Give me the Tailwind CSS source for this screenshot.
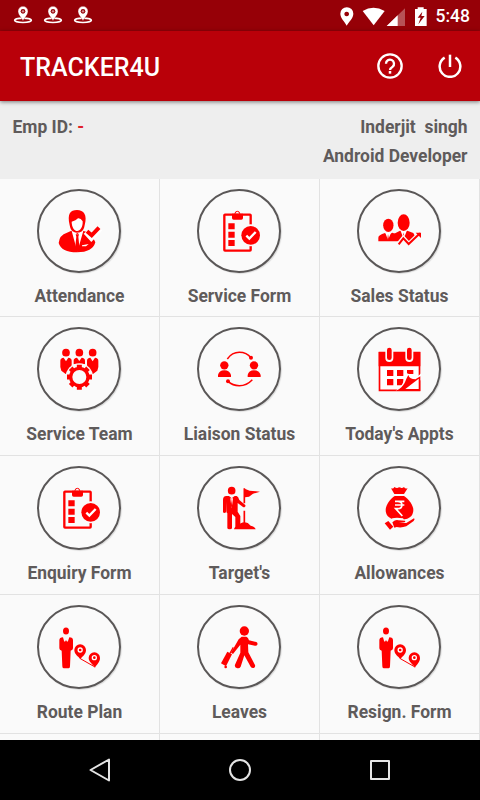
<!DOCTYPE html>
<html lang="en">
<head>
    <meta charset="UTF-8">
    <meta name="viewport" content="width=device-width, initial-scale=1.0">
    <title>TRACKER4U</title>
    <script src="https://cdn.jsdelivr.net/npm/@tailwindcss/browser@4"></script>
</head>
<body class="w-[480px] h-[800px] overflow-hidden flex flex-col bg-[#eeeeee] font-[Roboto,sans-serif] text-[#5f5b5b]">
    <!-- Shared icons -->
    <svg class="hidden">
        <symbol id="tracker" viewBox="0 0 60 54">
            <ellipse cx="30" cy="43" rx="25" ry="6.500" fill="none" stroke="#fff" stroke-width="5"/>
            <path d="M30 45C25 34 15 27 15 16a15 15 0 0 1 30 0C45 27 35 34 30 45Z" fill="#fff" stroke="#960007" stroke-width="1"/>
            <circle cx="30" cy="16" r="7" fill="#960007"/>
            <circle cx="30" cy="16" r="3.500" fill="#d48a90"/>
        </symbol>
        <symbol id="form" viewBox="0 0 144 144">
            <rect x="28" y="23" width="79" height="108" rx="2" fill="none" stroke="red" stroke-width="7"/>
            <circle cx="67" cy="20" r="7" fill="none" stroke="red" stroke-width="3"/>
            <path d="M51 20h33v13q0 5-5 5H56q-5 0-5-5Z"/>
            <path d="M40 49h19v18H40ZM40 74h19v18H40ZM40 99h19v18H40Z"/>
            <circle cx="107" cy="85" r="33" fill="#fafafa"/>
            <circle cx="107" cy="85" r="28"/>
            <path d="m94 86 9 9 19-20" fill="none" stroke="#fff" stroke-width="7"/>
        </symbol>
        <symbol id="route" viewBox="0 0 144 144">
            <ellipse cx="33" cy="24" rx="9" ry="10.500"/>
            <path d="M24 43 28 57l3-5 2 4 2-4 3 5 5-14q11 0 11 9v24q0 6-7 7l-2 47q0 6-4 6H26q-4 0-4-6l-2-47q-7-1-7-7V52q0-9 11-9Z"/>
            <path d="M76 109C70 99 58 95 58 81a17 17 0 0 1 35 0C93 95 82 99 76 109ZM120 134C114 123 101 118 101 105a17 17 0 0 1 34 0C135 118 126 123 120 134Z"/>
            <path d="m76 107 44 25" stroke="red" stroke-width="3"/>
            <circle cx="75.500" cy="81" r="6" fill="none" stroke="#fff" stroke-width="4"/>
            <circle cx="118" cy="104" r="6" fill="none" stroke="#fff" stroke-width="4"/>
        </symbol>
    </svg>

    <!-- Status bar -->
    <div class="h-[31px] shrink-0 bg-[#960007] flex items-center justify-between pl-[13px] pr-[10px] text-white">
        <div class="flex gap-[10px] -mt-px">
            <svg class="w-5 h-[18px]"><use href="#tracker"/></svg>
            <svg class="w-5 h-[18px]"><use href="#tracker"/></svg>
            <svg class="w-5 h-[18px]"><use href="#tracker"/></svg>
        </div>
        <div class="flex items-center">
            <svg class="w-[88px] h-5 mr-[8px]" viewBox="0 0 264 60" fill="#fff">
                <path fill-rule="evenodd" d="M20 59C14 47 1 36 1 23a19 19 0 0 1 39 0C40 36 27 47 20 59ZM20 17a7 7 0 1 0 .1 0Z"/>
                <path d="M68 15Q100-5 134 15L101 58Z"/>
                <path d="M195 7V60H140Z" fill-opacity=".32"/>
                <path d="M173 28V60H140Z"/>
                <path fill-rule="evenodd" d="M225 9h8V4h18v5h9v51h-35ZM247 17 233 35h9l-7 20 19-25h-10Z"/>
            </svg>
            <span class="text-[17.500px] leading-none font-medium pt-[2px]">5:48</span>
        </div>
    </div>

    <!-- Toolbar -->
    <div class="relative h-[70px] shrink-0 bg-[#b90009] shadow-[0_1px_4px_rgba(0,0,0,0.5)] flex items-center pl-5 pr-[18px]">
        <h1 class="flex-1 text-white text-[25px] leading-none font-medium tracking-[0.03px] pt-[3px]">TRACKER4U</h1>
        <svg class="w-[26px] h-[26px] mr-[35px]" viewBox="0 0 78 78" fill="none" stroke="#fff">
            <circle cx="39" cy="39" r="35" stroke-width="7"/>
            <path d="M27 32a12 12 0 1 1 20 9Q39 46 39 51" stroke-width="7"/>
            <path d="M39 54v8" stroke-width="7.500"/>
        </svg>
        <svg class="w-6 h-6" viewBox="0 0 72 72" fill="none" stroke="#fff" stroke-width="7.500">
            <path d="M36 2v37"/>
            <path d="M20 11A31 31 0 1 0 52 11"/>
        </svg>
    </div>

    <!-- Employee -->
    <div class="h-[77.500px] shrink-0 flex justify-between px-[12.500px] pt-[11.500px] text-[17.450px] leading-[29px] font-bold">
        <p>Emp ID: <span class="text-[#e02028]">-</span></p>
        <p class="text-right whitespace-pre">Inderjit  singh<br>Android Developer</p>
    </div>

    <!-- Menu -->
    <main class="h-[561.500px] shrink-0 overflow-hidden grid grid-cols-3 auto-rows-[138.750px] bg-[#fafafa] text-[17.450px] leading-5 font-bold text-center [&>div]:border-r [&>div]:border-b [&>div]:border-[#e2e2e2] [&>div]:flex [&>div]:flex-col [&>div]:items-center [&>div]:pt-[10px] [&_i]:size-[84px] [&_i]:mb-[13px] [&_i]:mr-px [&_i]:shrink-0 [&_i]:flex [&_i]:items-center [&_i]:justify-center [&_i]:rounded-full [&_i]:border-2 [&_i]:border-[#5a5757] [&_i]:shadow-[1px_1px_1px_rgba(0,0,0,0.12)] [&_i>svg]:size-12 [&_i>svg]:fill-[red]">
        <div>
            <i><svg viewBox="0 0 144 144">
                <path d="M49 71Q67 83 84 71q14 3 25 11l12 24q-8 30-55 30-47 0-55-28 2-24 25-31Z"/>
                <path d="m49 68 18 66 19-66-19 13Z" fill="#fff"/>
                <path d="M62 82h10l-2 7 4 38-7 8-7-8 4-38Z"/>
                <ellipse cx="66" cy="48" rx="23" ry="28" fill="#fff" stroke="#fff" stroke-width="4"/>
                <path d="M44 55C36 20 46 9 66 9s32 14 23 46C86 75 75 77 66 77S47 73 44 55Z"/>
                <path d="M50 44Q63 41 69 34 77 33 83 43C84 61 75 72 67 72S50 62 50 44Z" fill="#fff"/>
                <path d="m93 74 16 17 26-27" fill="none" stroke="#fff" stroke-width="19"/>
                <path d="m96 73 14 12 22-23" fill="none" stroke="red" stroke-width="12"/>
                <path d="m81 115 20-4-8 7H81Z" fill="#fff"/>
            </svg></i>
            Attendance
        </div>
        <div><i><svg><use href="#form"/></svg></i>Service Form</div>
        <div>
            <i><svg viewBox="0 0 144 144">
                <ellipse cx="40" cy="55" rx="15.500" ry="20"/>
                <path d="M10 103V92q0-8 20-14l10 5 12-6q12 3 19 8v18Z"/>
                <path d="m31 78 8 20 9-20Z" fill="#fff"/>
                <path d="m39 81 3 17h-5Z"/>
                <ellipse cx="86" cy="47" rx="20" ry="27" fill="#fafafa"/>
                <ellipse cx="86" cy="47" rx="18" ry="25"/>
                <path d="M56 81 75 71l11 5 11-5 18 7 5 10v14H56Z"/>
                <path d="m77 72 9 24 9-24Z" fill="#fff"/>
                <path d="m86 76 3 20h-6Z"/>
                <path d="m69 113 16-20 16 18 36-34" fill="none" stroke="#fafafa" stroke-width="13"/>
                <path d="m71 112 14-18 16 17 34-32" fill="none" stroke="red" stroke-width="6"/>
                <path d="M122 77h16v16Z"/>
            </svg></i>
            Sales Status
        </div>
        <div>
            <i><svg viewBox="0 0 144 144">
                <circle cx="33" cy="23" r="11.500"/><circle cx="73" cy="23" r="11.500"/><circle cx="113" cy="23" r="11.500"/>
                <path d="m26 38 7 11 7-11q10 1 10 9v22L40 87h-8L19 77 16 66V47q0-8 10-9Z"/>
                <path d="m106 38 7 11 7-11q10 1 10 9v19l-3 11-13 10h-8L96 69V47q0-8 10-9Z"/>
                <path d="m66 38 7 10 7-10q10 1 10 9v11H56V47q0-8 10-9Z"/>
                <circle cx="73" cy="96" r="41" fill="#fafafa"/>
                <circle cx="73" cy="96" r="26" fill="none" stroke="red" stroke-width="10"/>
                <path d="M73 59v10M73 123v11M36 96h10M100 96h11M47 70l7 7M92 115l7 7M47 122l7-7M92 77l7-7" stroke="red" stroke-width="15"/>
            </svg></i>
            Service Team
        </div>
        <div>
            <i><svg viewBox="0 0 144 144">
                <circle cx="28" cy="61" r="12.500"/><circle cx="117" cy="61" r="12.500"/>
                <path d="M9 96V90q3-14 19-14t20 14v6ZM98 96V90q3-14 19-14t20 14v6Z"/>
                <path d="M37 42Q51 22 73 22q22 0 35 17M39 109q14 13 34 13 22 0 39-18" fill="none" stroke="red" stroke-width="4.500"/>
                <circle cx="108" cy="38" r="6"/><circle cx="39" cy="109" r="6"/>
            </svg></i>
            Liaison Status
        </div>
        <div>
            <i><svg viewBox="0 0 144 144">
                <path d="M13.500 23h120v113h-120Z" fill="#fff" stroke="red" stroke-width="5"/>
                <path d="M11 21h125v43H11Z"/>
                <path d="M43 17v22M103 17v22" fill="none" stroke="#fafafa" stroke-width="24" stroke-linecap="round"/>
                <path d="M43 15v23M103 15v23" fill="none" stroke="red" stroke-width="14" stroke-linecap="round"/>
                <path d="M36 75h19v18H36ZM66 75h19v18H66ZM96 75h19v12H96ZM36 102h19v19H36ZM66 102h19v19H66Z"/>
                <path d="M62 137C88 121 83 107 97 85l26 13 16-13v20Z" fill="#fff"/>
                <path d="M64 138C91 123 89 108 100 90q4 14 24 13L78 130l58-36v44Z"/>
                <path d="m91 132 40-31v31Z" fill="#fff"/>
            </svg></i>
            Today's Appts
        </div>
        <div><i><svg><use href="#form"/></svg></i>Enquiry Form</div>
        <div>
            <i><svg viewBox="0 0 144 144">
                <circle cx="50" cy="20" r="11.500"/>
                <path d="M34 36h8l8 7 9-7h6q5 2 8 12l17 14q3 3 0 6-2 3-6 1L68 57v26l8 13v26h10v13H61V99L51 90v42q0 4-7 4t-7-4V88q-2 0-3-6V54l-1 31q-5 4-9 0V47q0-10 10-11Z"/>
                <path d="m46 43 4 30 4-30Z" fill="#fff"/>
                <path d="m49 43 3 25h-4Z"/>
                <path d="M88 13v45M88 80v38" stroke="red" stroke-width="5"/>
                <path d="m89 14 15 6 31 3-21 6-12 9-12 2Z"/>
                <path d="M57 136q2-9 11-9 8-12 21-12 10 0 18 10 12 2 15 11Z"/>
            </svg></i>
            Target's
        </div>
        <div>
            <i><svg viewBox="0 0 144 144">
                <path d="M48 13q8 2 10-4 6 4 9 3 6-5 12 0 4 1 8-3 3 6 11 4l-11 17H58Z"/>
                <path d="M59 36h28c14 9 28 27 28 42q0 29-42 30-41-1-41-30c0-15 13-33 27-42Z"/>
                <path d="M60 52h28M60 63h28M62 52h6c17 0 17 22 0 22h-6l20 22" fill="none" stroke="#fff" stroke-width="5"/>
                <path d="m42 116 10-13q12-4 32 0l3 4q15-2 30-9L92 131H61l-12 7-19-19Z" fill="#fafafa"/>
                <path d="m40 111 15 17-10 9-16-19ZM52 115q10-9 18-6l20 1q3 3-2 5l-16 1 22 1 23-14q4 2-1 8l-22 16q-15 5-29 2l-7 2Z"/>
            </svg></i>
            Allowances
        </div>
        <div><i><svg><use href="#route"/></svg></i>Route Plan</div>
        <div>
            <i><svg viewBox="0 0 144 144">
                <circle cx="88" cy="24" r="14"/>
                <path d="M80 41h14q6 2 8 11l22 5q5 2 3 8-2 4-7 3l-21-4 1 24 20 38q2 7-4 9-6 1-9-4L88 97l-11 34q-4 7-12 4-7-3-5-10l16-36V65L54 93l-6-4 23-40Z"/>
                <path d="m37 86 14 8-18 36-15-9Z"/>
                <path d="m45 91 10-18" stroke="red" stroke-width="4"/>
                <circle cx="32" cy="132" r="4"/>
            </svg></i>
            Leaves
        </div>
        <div><i><svg><use href="#route"/></svg></i>Resign. Form</div>
        <div></div>
        <div></div>
        <div></div>
    </main>

    <!-- Navigation bar -->
    <div class="h-[60px] shrink-0 bg-black flex items-center justify-center gap-[116px]">
        <svg class="size-6 -ml-px" viewBox="0 0 24 24" fill="none" stroke="#e4e4e4" stroke-width="2" stroke-linejoin="round"><path d="M21 1.500v21L2.500 12Z"/></svg>
        <svg class="size-6" viewBox="0 0 24 24" fill="none" stroke="#e4e4e4" stroke-width="2"><circle cx="12" cy="12" r="10"/></svg>
        <svg class="size-6" viewBox="0 0 24 24" fill="none" stroke="#e4e4e4" stroke-width="2" stroke-linejoin="round"><path d="M3 3h18v18H3Z"/></svg>
    </div>
</body>
</html>
